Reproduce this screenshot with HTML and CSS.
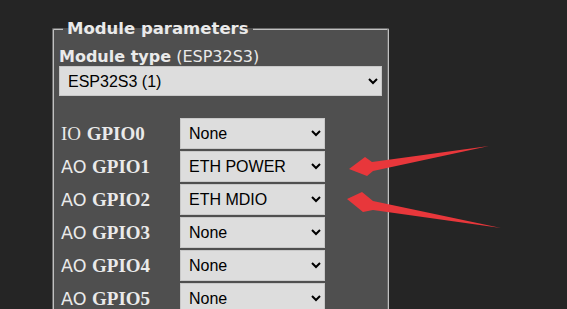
FILE: index.html
```html
<!DOCTYPE html>
<html lang="en">
<head>
  <meta charset="UTF-8" />
  <meta name="viewport" content="width=device-width, initial-scale=1.0"/>
  <title>Configure Template</title>
  <link rel="stylesheet" href="styles.css">
</head>
<body>
  <div id="page">
    <fieldset class="params">
      <legend>Module parameters</legend>
      <div class="type-label"><b>Module type</b> (ESP32S3)</div>
      <select class="type-select">
        <option>ESP32S3 (1)</option>
      </select>

      <div class="pins">
        <div class="pin-label"><span class="io">IO</span> <b>GPIO0</b></div>
        <select><option>None</option></select>
        <div class="pin-label">AO <b>GPIO1</b></div>
        <select><option>ETH POWER</option></select>
        <div class="pin-label">AO <b>GPIO2</b></div>
        <select><option>ETH MDIO</option></select>
        <div class="pin-label">AO <b>GPIO3</b></div>
        <select><option>None</option></select>
        <div class="pin-label">AO <b>GPIO4</b></div>
        <select><option>None</option></select>
        <div class="pin-label">AO <b>GPIO5</b></div>
        <select><option>None</option></select>
      </div>
    </fieldset>
  </div>

  <!-- annotation arrows drawn over the screenshot -->
  <svg class="arrows" width="567" height="309" viewBox="0 0 567 309">
    <polygon points="349,169 365,157 372,162 489,146 373,171 367,176" />
    <polygon points="347,199 362,192 373,201 501,228 373,210 363,212" />
  </svg>
</body>
</html>
```

FILE: styles.css
```css
* {
  box-sizing: border-box;
}
html, body {
  margin: 0;
  padding: 0;
  width: 100%;
  height: 100%;
  overflow: hidden;
}
body {
  background: #252525;
  color: #eaeaea;
  font-family: "DejaVu Sans", Verdana, sans-serif;
  font-size: 16px;
  position: relative;
}

#page {
  padding: 19px 0 0 52px;
}

.params {
  width: 337px;
  margin: 0;
  padding: 0 5px 20px 5px;
  background: #4f4f4f;
  border: 2px groove #c0c0c0;
  border-radius: 2px;
}

.params legend {
  margin-left: 4px;
  padding: 0 4px;
  font-weight: bold;
  font-size: 16.5px;
}

.type-label {
  margin-top: 9px;
  line-height: 19px;
}

select {
  font-family: "Liberation Sans", Arial, sans-serif;
  font-size: 16px;
  color: #000;
  background: #dddddd;
  border: 1px solid #c8c8c8;
  border-radius: 0;
  height: 31px;
  padding: 0 4px;
}

.type-select {
  width: 323px;
  height: 30px;
}

.pins {
  display: grid;
  grid-template-columns: 119px 145px;
  row-gap: 2px;
  align-items: center;
  margin-top: 22px;
  padding-left: 2px;
}

.pin-label {
  font-family: "DejaVu Sans", Verdana, sans-serif;
  font-size: 17.5px;
  white-space: nowrap;
}
.pin-label .io {
  font-family: "Liberation Serif", "Times New Roman", serif;
  font-size: 19px;
}
.pin-label b {
  font-family: "Liberation Serif", "Times New Roman", serif;
  font-size: 19px;
}

.arrows {
  position: absolute;
  left: 0;
  top: 0;
  pointer-events: none;
}
.arrows polygon {
  fill: #e8373b;
}
```
